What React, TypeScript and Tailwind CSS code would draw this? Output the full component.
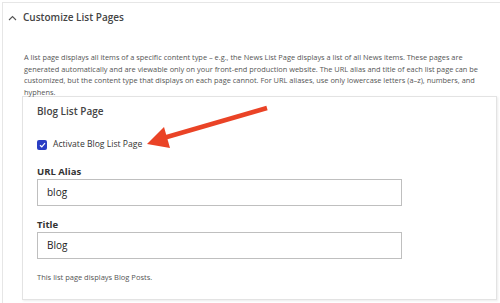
import React from 'react';

const font = { fontFamily: '"Open Sans", "Liberation Sans", sans-serif' };

const Field = ({ label, value }: { label: string; value: string }) => (
  <div className="flex flex-col">
    <label className="text-[9.5px] font-bold text-[#333] leading-[12px] mb-[1px]">{label}</label>
    <div className="w-[365px] h-[27px] border border-[#bfbfbf] flex items-center px-[9px] text-[10px] text-[#222]">
      {value}
    </div>
  </div>
);

export default function App() {
  return (
    <div className="relative w-[500px] h-[303px] overflow-hidden bg-white pl-[2px] pt-[2px]" style={font}>
      <div className="w-[520px] h-[320px] border border-[#e6e6e6] bg-white">
        {/* header */}
        <div className="flex items-center h-[28px] pl-[5px] gap-[6px] text-[#444]">
          <svg width="9" height="6" viewBox="0 0 9 6" className="mt-[1px]">
            <path d="M1 5 L4.5 1.5 L8 5" fill="none" stroke="#555" strokeWidth="1.1" />
          </svg>
          <span className="text-[10px] font-semibold">Customize List Pages</span>
        </div>

        <div className="pl-[19px] pt-[21px]">
          <p className="pl-[2px] w-[458px] text-[7.4px] leading-[11.6px] text-[#555]">
            A list page displays all items of a specific content type – e.g., the News List Page displays a list of all News items. These pages are generated automatically and are viewable only on your front-end production website. The URL alias and title of each list page can be customized, but the content type that displays on each page cannot. For URL aliases, use only lowercase letters (a–z), numbers, and hyphens.
          </p>

          {/* inner card */}
          <div className="mt-[-2px] w-[475px] h-[204px] border border-[#e3e3e3] shadow-[1px_1px_2px_rgba(0,0,0,0.08)] px-[14px] pt-[7px]">
            <h3 className="text-[10px] font-semibold text-[#444] leading-[14px]">Blog List Page</h3>

            <div className="flex items-center gap-[6px] mt-[20px]">
              <div className="w-[10px] h-[10px] rounded-[2px] bg-[#2b3ec4] flex items-center justify-center">
                <svg width="7" height="6" viewBox="0 0 7 6">
                  <path d="M1 3.2 L2.8 4.8 L6 1.2" fill="none" stroke="white" strokeWidth="1.2" />
                </svg>
              </div>
              <span className="text-[8.6px] text-[#333]">Activate Blog List Page</span>
            </div>

            <div className="mt-[15px] flex flex-col gap-[13px]">
              <Field label="URL Alias" value="blog" />
              <Field label="Title" value="Blog" />
            </div>

            <p className="mt-[13px] text-[7.5px] text-[#555]">This list page displays Blog Posts.</p>
          </div>
        </div>
      </div>

      {/* annotation arrow */}
      <svg className="absolute left-0 top-0 pointer-events-none" width="500" height="303" viewBox="0 0 500 303">
        <line x1="267" y1="108" x2="160" y2="139" stroke="#ea4326" strokeWidth="4.5" strokeLinecap="butt" />
        <polygon points="147,144 164,127 170,148" fill="#ea4326" />
      </svg>
    </div>
  );
}
